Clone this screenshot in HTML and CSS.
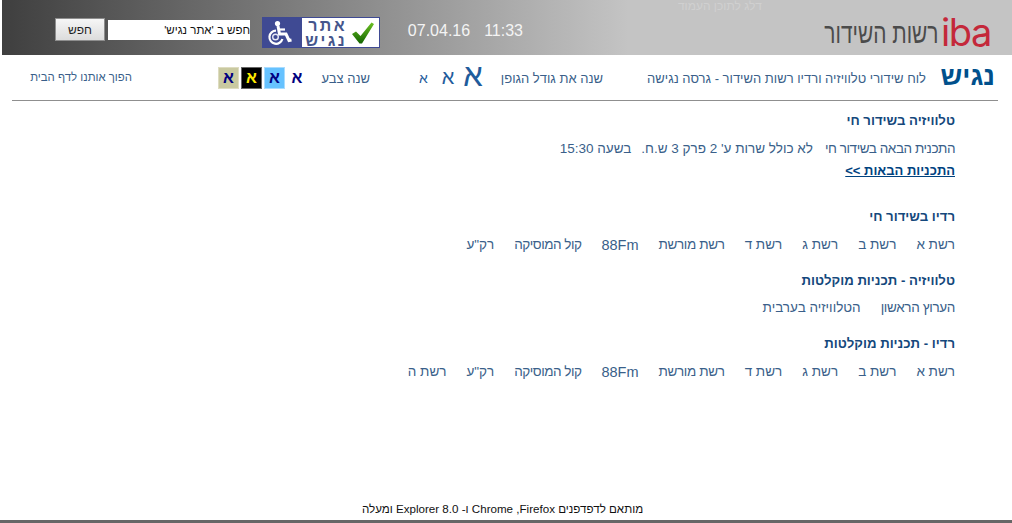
FILE: index.html
```html
<!DOCTYPE html>
<html lang="he" dir="rtl">
<head>
<meta charset="utf-8">
<title>רשות השידור - אתר נגיש</title>
<link rel="stylesheet" href="styles.css">
</head>
<body>
<div class="page">
  <header class="top">
    <a class="skip" href="#main">דלג לתוכן העמוד</a>
    <div class="logo"><span class="logo-iba">iba</span><span class="logo-name">רשות השידור</span></div>
    <div class="clock"><span>11:33</span><span>07.04.16</span></div>
    <div class="badge">
      <svg class="check" viewBox="0 0 22 22" width="22" height="22"><defs><linearGradient id="chk" x1="0" y1="0" x2="0" y2="1"><stop offset="0" stop-color="#6cc024"/><stop offset="1" stop-color="#126400"/></linearGradient></defs><path d="M0 12 L4 9.5 L8.5 14 L19.5 0.5 L22 2 L10 21.5 L7.5 21.5 Z" fill="url(#chk)"/></svg>
      <span class="badge-text"><span>אתר</span><span>נגיש</span></span>
      <span class="badge-icon">
        <svg viewBox="0 0 39 29" width="39" height="29"><circle cx="14.5" cy="5.5" r="2.6" fill="#fff"/><path d="M15 8 L16.5 16 L23 16 L26 22.5 L28.5 22" fill="none" stroke="#fff" stroke-width="3"/><path d="M16 11.5 L22 11.5" stroke="#fff" stroke-width="2.2"/><path d="M13 12.6 A6.6 6.6 0 1 0 19.4 21" fill="none" stroke="#fff" stroke-width="2.2"/><circle cx="12.5" cy="19" r="2.8" fill="none" stroke="#e6e8f5" stroke-width="1.4"/></svg>
      </span>
    </div>
    <form class="search">
      <input class="search-input" type="text" value="חפש ב 'אתר נגיש'">
      <button class="search-btn" type="button">חפש</button>
    </form>
  </header>
  <nav class="tools">
    <h1 class="title">נגיש</h1>
    <span class="tagline">לוח שידורי טלוויזיה ורדיו רשות השידור - גרסה נגישה</span>
    <span class="label size-label">שנה את גודל הגופן</span>
    <span class="sizes"><a class="sz-l">א</a><a class="sz-m">א</a><a class="sz-s">א</a></span>
    <span class="label color-label">שנה צבע</span>
    <span class="swatches">
      <a class="sw sw-plain">א</a><a class="sw sw-blue">א</a><a class="sw sw-black">א</a><a class="sw sw-beige">א</a>
    </span>
    <a class="home">הפוך אותנו לדף הבית</a>
  </nav>
  <main id="main" class="content">
    <section class="block block-live">
      <h2>טלוויזיה בשידור חי</h2>
      <p class="next"><span class="next-a">התכנית הבאה בשידור חי</span><span>לא כולל שרות ע' 2 פרק 3 ש.ח.</span><span>בשעה 15:30</span></p>
      <a class="more" href="#">התכניות הבאות &gt;&gt;</a>
    </section>
    <section class="block">
      <h2>רדיו בשידור חי</h2>
      <div class="links"><a>רשת א</a><a>רשת ב</a><a>רשת ג</a><a>רשת ד</a><a class="mid">רשת מורשת</a><a class="latin">88Fm</a><a class="long">קול המוסיקה</a><a>רק"ע</a></div>
    </section>
    <section class="block block-tv">
      <h2>טלוויזיה - תכניות מוקלטות</h2>
      <div class="links"><a class="mid">הערוץ הראשון</a><a>הטלוויזיה בערבית</a></div>
    </section>
    <section class="block">
      <h2>רדיו - תכניות מוקלטות</h2>
      <div class="links"><a>רשת א</a><a>רשת ב</a><a>רשת ג</a><a>רשת ד</a><a class="mid">רשת מורשת</a><a class="latin">88Fm</a><a class="long">קול המוסיקה</a><a>רק"ע</a><a>רשת ה</a></div>
    </section>
  </main>
  <footer class="foot">מותאם לדפדפנים Firefox&rlm;, Chrome ו- Explorer 8.0 ומעלה</footer>
</div>
</body>
</html>
```
FILE: styles.css
```css
* { box-sizing: border-box; }
html, body { margin: 0; padding: 0; }
body { font-family: "Liberation Sans", Arial, sans-serif; color: #3a5f8a; background: #fff; overflow: hidden; }
.page { height: 523px; display: flex; flex-direction: column; }

.top { position: relative; margin-left: 2px; height: 55px; flex: none; display: flex; align-items: center; padding-right: 22px;
  background: linear-gradient(to left, #c4c4c4 0, #c4c4c4 38%, #3f3f3f 100%); }
.skip { position: absolute; top: 0; left: 680px; width: 80px; white-space: nowrap; font-size: 12px; line-height: 12px; color: #d0d0d0; text-decoration: none; }
.logo { display: flex; align-items: flex-end; width: 165px; height: 40px; margin-top: 7px; }
.logo-iba { font-family: Inter, "Liberation Sans", sans-serif; font-weight: 400; font-size: 38px; line-height: 34px; color: #c4283a; letter-spacing: -1.4px; width: 49px; flex: none; direction: ltr; text-align: right; margin-bottom: 2px; }
.logo-name { font-size: 29px; line-height: 36px; color: #4b4b4b; margin-right: 3px; transform: scaleX(0.72); transform-origin: right center; white-space: nowrap; }
.clock { display: flex; gap: 14px; margin-right: 302px; color: #f4f4f4; font-size: 16px; margin-top: 6px; white-space: nowrap; width: 115px; }
.badge { display: flex; align-items: center; margin-right: 28px; width: 118px; height: 31px; background: #fff; border: 1px solid #3f4a93; margin-top: 10px; padding-right: 5px; }
.check { flex: none; }
.badge-text { display: flex; flex-direction: column; font-size: 16px; line-height: 15px; font-weight: 700; color: #45568c; letter-spacing: 2.4px; margin-right: 5px; width: 36px; text-align: center; white-space: nowrap; }
.badge-icon { margin-right: auto; width: 39px; height: 29px; background: #3f4a93; display: flex; flex: none; }
.search { display: flex; align-items: center; gap: 3px; margin-right: 12px; margin-top: 4px; }
.search-input { width: 142px; height: 20px; border: 0; padding: 0; margin: 0; background: #fff; font: 11.5px "Liberation Sans", Arial, sans-serif; color: #111; outline: 0; }
.search-btn { width: 50px; height: 23px; padding: 0; background: linear-gradient(#f6f6f6, #dcdcdc); border: 1px solid #8e8e8e; font: 12px "Liberation Sans", Arial, sans-serif; color: #222; }

.tools { margin: 0 14px 0 12px; height: 46px; flex: none; border-bottom: 1px solid #8f8f8f; display: flex; align-items: center; white-space: nowrap; }
.title { margin: -3px 0 0 0; font-size: 27px; line-height: 30px; font-weight: 700; color: #00508c; width: 58px; padding-right: 3px; }
.tagline { font-size: 13px; margin-right: 14px; width: 278px; margin-top: 2px; }
.label { font-size: 13px; margin-top: 2px; }
.size-label { margin-right: 45px; width: 102px; }
.sizes { display: flex; align-items: center; margin-right: 18px; width: 68px; flex: none; color: #1f5c9c; }
.sz-l { font-size: 31px; line-height: 26px; width: 20px; flex: none; text-align: center; margin-top: -4px; }
.sz-m { font-size: 20px; width: 24px; flex: none; margin-right: 3px; text-align: center; }
.sz-s { font-size: 14px; width: 15px; flex: none; margin-right: 5px; text-align: center; }
.color-label { margin-right: 45px; width: 48px; }
.swatches { display: flex; align-items: center; margin-right: 19px; width: 85px; gap: 2px; }
.sw { width: 21px; height: 22px; display: flex; align-items: center; justify-content: center; font-size: 16px; font-weight: 700; color: #00007f; border: 1px solid transparent; flex: none; }
.sw-plain { margin-left: 4px; width: 12px; }
.sw-blue { background: #66c2ff; border-color: #a9dcff; }
.sw-black { background: #000; border-color: #666; color: #ffea00; }
.sw-beige { background: #c9c9a0; border-color: #dedcc0; }
.home { font-size: 11.4px; margin-right: 86px; margin-top: -2px; }

.content { padding-right: 57px; padding-left: 40px; flex: 1; }
.block { margin: 0 0 19px; }
.block-live { margin-bottom: 29px; padding-top: 12px; }
h2 { margin: 0 0 11px; font-size: 13.2px; line-height: 16px; font-weight: 700; color: #14487c; }
.block-tv h2 { margin-bottom: 10px; }
.next { margin: 0; display: flex; gap: 10px; font-size: 13.5px; line-height: 18px; }
.next-a { letter-spacing: -0.45px; margin-left: 2px; }
.more { display: inline-block; margin-top: 4px; font-size: 13px; line-height: 18px; font-weight: 700; color: #00427f; text-decoration: underline; }
.links { display: flex; gap: 20px; font-size: 13.5px; line-height: 18px; white-space: nowrap; }
.mid { letter-spacing: -0.35px; }
.long { letter-spacing: -0.5px; }
.latin { font-size: 14.5px; }

.foot { flex: none; text-align: center; font-size: 11.6px; line-height: 16px; color: #111; padding: 0 7px 3px 0; border-bottom: 3px solid #666; height: 22px; }
```
